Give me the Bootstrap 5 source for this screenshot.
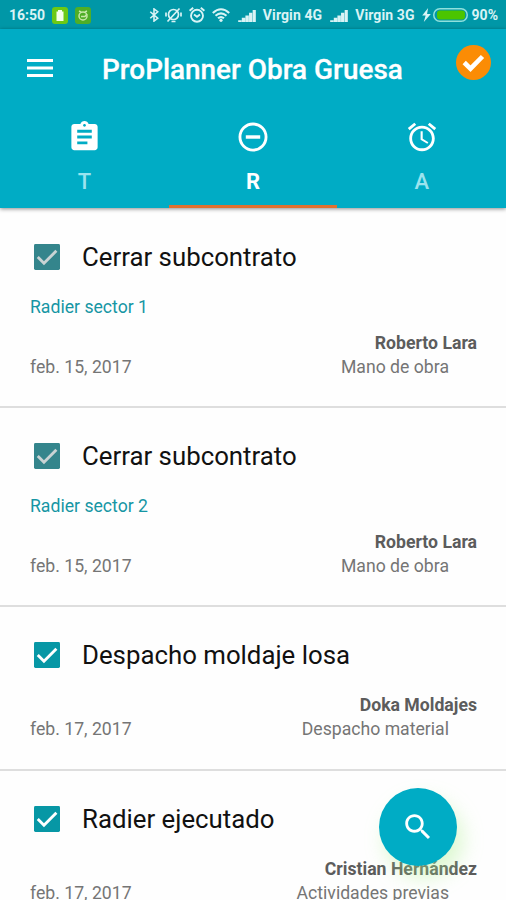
<!DOCTYPE html>
<html lang="es">
<head>
<meta charset="utf-8">
<meta name="viewport" content="width=device-width, initial-scale=1">
<title>ProPlanner Obra Gruesa</title>
<link href="https://cdn.jsdelivr.net/npm/bootstrap@5.3.0/dist/css/bootstrap.min.css" rel="stylesheet">
<style>
body{font-family:Roboto,"Liberation Sans",sans-serif;height:900px;background:#fefefe;overflow:hidden}
svg{display:block;flex:none}
.status-bar{height:29px;background:#0097a7;color:#d9f3f5;font-size:14px;font-weight:700;line-height:29px;padding:1px 8px 0 9px}
.st-bat{margin-left:7px}
.st-icon{margin-left:6px}
.st-net{letter-spacing:.1px;margin-left:7px}
.app-head{height:179px;background:#00acc5;box-shadow:0 1px 4px rgba(0,0,0,.45);z-index:2}
.app-title{font-size:27.9px;font-weight:500;line-height:36px;margin:2px 0 0 46px;-webkit-text-stroke:.3px #fff}
.tool-bar{height:80px;padding:0 15px 0 24px}
.done-mark{margin-bottom:13px}
.tab-strip{height:99px}
.tab-item{height:99px;padding:10px 0 0;border-bottom:3px solid transparent;border-radius:0;color:#9be3ee}
.tab-item.active{color:#fff;border-color:#e0702f}
.tab-item svg{color:#fff}
.tab-item span{font-size:22px;line-height:26px;font-weight:500;margin-top:14px}
.task-list{padding-top:.6px}
.task{height:199.2px;padding:29.2px 29px 0 30px;border-bottom:2px solid #dedede}
.task.short{height:164px}
.task-title{font-size:25.8px;font-weight:400;line-height:38px;margin:0 0 0 22px;color:#111}
.task-sub{font-size:17.65px;line-height:24px;margin-top:19px;color:#1696a4}
.task-meta{font-size:17.65px;line-height:24px;margin-top:12px;color:#757575}
.short .task-meta{margin-top:19px}
.task-owner{font-weight:700;color:#5c5c5c}
.task-kind{margin-right:28px}
.task-box{margin-left:4px}
.box-on{color:#0797a5;--tick:#fff}
.box-off{color:#34858c;--tick:#c9d3d4}
.fab{position:fixed;left:379px;top:788px;width:78px;height:78px;background:#00acc5;box-shadow:6px 12px 20px rgba(170,240,140,.4);z-index:3}
</style>
<script src="https://cdn.jsdelivr.net/npm/bootstrap@5.3.0/dist/js/bootstrap.bundle.min.js"></script>
</head>
<body>
<svg width="0" height="0" class="d-none">
  <symbol id="signal" viewBox="0 0 19 14"><path fill="currentColor" d="M0 12h3.700v2H0zM3.900 9.500h3.700V14H3.900zM7.800 7h3.700v7H7.800zM11.700 4h3.500v10h-3.500zM15.600 1H19v13h-3.400z"/></symbol>
  <symbol id="alarm" viewBox="0 0 24 24"><path fill="currentColor" d="M22 5.720l-4.600-3.860-1.290 1.530 4.600 3.860L22 5.720zM7.880 3.390L6.600 1.860 2 5.710l1.290 1.530 4.590-3.850zM12.500 8H11v6l4.750 2.850.75-1.230-4-2.370V8zM12 4c-4.970 0-9 4.030-9 9s4.020 9 9 9c4.970 0 9-4.030 9-9s-4.030-9-9-9zm0 16c-3.870 0-7-3.130-7-7s3.130-7 7-7 7 3.130 7 7-3.130 7-7 7z"/></symbol>
  <symbol id="alarm-small" viewBox="0 0 18 18"><g fill="none" stroke="currentColor" stroke-width="1.900"><circle cx="9" cy="9.800" r="6"/><path d="M1.600 4.800l3.600-3M16.400 4.800l-3.600-3M6 8.500l3 2.300 3-2.300"/></g></symbol>
  <symbol id="checkbox" viewBox="3 3 18 18"><rect x="3" y="3" width="18" height="18" rx="1" fill="currentColor"/><path d="M5.600 12l4.300 4.300 8.600-8.600" fill="none" stroke="var(--tick)" stroke-width="2"/></symbol>
</svg>

<div class="status-bar d-flex align-items-center">
  <span>16:50</span>
  <svg class="st-bat" width="16" height="17" viewBox="0 0 16 17"><rect width="16" height="17" rx="3" fill="#6cc915"/><path fill="#f5ffe9" d="M4.500 4.500H6V3h4v1.500h1.500V14h-7z"/></svg>
  <svg class="st-bat" width="16" height="17" viewBox="0 0 16 17"><rect width="16" height="17" rx="3" fill="#4fae27"/><g fill="none" stroke="#c6e8a8" stroke-width="1.500"><circle cx="8" cy="9" r="4"/><path d="M4 4l2 1M12 4l-2 1M6 9.500h4l2-2.500"/></g></svg>
  <div class="d-flex align-items-center ms-auto">
    <svg width="10" height="14" viewBox="0 0 10 15"><path d="M1 4l8 7-4 3V1L9 4l-8 7" fill="none" stroke="currentColor" stroke-width="1.700"/></svg>
    <svg class="st-icon" width="17" height="16" viewBox="0 0 17 16"><g fill="none" stroke="currentColor" stroke-width="1.700"><circle cx="8.500" cy="7.500" r="5"/><path d="M6.500 14.500h4M2.500 14.500L14.500 1.500M1 5.500v4M16 5.500v4"/></g></svg>
    <svg class="st-icon" width="18" height="18"><use href="#alarm-small"/></svg>
    <svg class="st-icon" width="18" height="14" viewBox="0 0 18 14"><g fill="none" stroke="currentColor" stroke-width="2.100"><path d="M.8 5Q9-2.500 17.200 5M3.500 7.800q5.500-4.800 11 0M6 10.300q3-2.500 6 0"/></g><circle cx="9" cy="12.300" r="1.600" fill="currentColor"/></svg>
    <svg class="ms-2" width="18" height="13"><use href="#signal"/></svg>
    <span class="st-net">Virgin 4G</span>
    <svg class="ms-2" width="18" height="13"><use href="#signal"/></svg>
    <span class="st-net">Virgin 3G</span>
    <svg class="st-bat" width="9" height="14" viewBox="0 0 8 13"><path d="M5.500 0L0 7h3.200L1.500 13 8 5.500H4.500z" fill="currentColor"/></svg>
    <svg style="margin-left:2px" width="35" height="14" viewBox="0 0 35 14"><rect x=".8" y=".8" width="33.400" height="12.400" rx="6" fill="none" stroke="#8fe0dc" stroke-width="1.500"/><rect x="4" y="2.500" width="28" height="9" rx="3" fill="#4bc500"/></svg>
    <span class="ms-1">90%</span>
  </div>
</div>

<header class="app-head position-relative text-white">
  <div class="tool-bar d-flex align-items-center">
    <svg width="32" height="24" viewBox="0 0 32 24"><path d="M3 3.500h26M3 11h26M3 18.500h26" stroke="#fff" stroke-width="3.200"/></svg>
    <h1 class="app-title text-nowrap">ProPlanner Obra Gruesa</h1>
    <svg class="done-mark ms-auto" width="35" height="35" viewBox="0 0 35 35"><circle cx="17.500" cy="17.500" r="17.500" fill="#fb8c05"/><path d="M8.200 17.500l6.300 6.200L26.500 11.500" fill="none" stroke="#fff" stroke-width="4.600"/></svg>
  </div>
  <nav class="nav nav-fill tab-strip flex-nowrap">
    <a class="tab-item nav-link d-flex flex-column align-items-center w-100" href="#">
      <svg width="35" height="36" viewBox="0 0 24 24"><path fill="currentColor" d="M19 3h-4.180C14.400 1.840 13.300 1 12 1c-1.300 0-2.400.84-2.820 2H5c-1.100 0-2 .9-2 2v14c0 1.100.9 2 2 2h14c1.100 0 2-.9 2-2V5c0-1.100-.9-2-2-2zm-7 0c.55 0 1 .45 1 1s-.45 1-1 1-1-.45-1-1 .45-1 1-1zm2 14H7v-2h7v2zm3-4H7v-2h10v2zm0-4H7V7h10v2z"/></svg>
      <span>T</span></a>
    <a class="tab-item active nav-link d-flex flex-column align-items-center w-100" href="#">
      <svg width="36" height="36" viewBox="0 0 24 24"><circle cx="12" cy="12" r="8.700" fill="none" stroke="currentColor" stroke-width="1.900"/><path d="M7.200 12h9.600" stroke="currentColor" stroke-width="2.300"/></svg>
      <span class="fw-bold">R</span></a>
    <a class="tab-item nav-link d-flex flex-column align-items-center w-100" href="#">
      <svg width="34" height="36" viewBox="0 0 24 24"><use href="#alarm"/></svg>
      <span>A</span></a>
  </nav>
</header>

<main class="task-list">
  <article class="task">
    <div class="d-flex align-items-center"><svg class="task-box box-off" width="26" height="26"><use href="#checkbox"/></svg><h2 class="task-title">Cerrar subcontrato</h2></div>
    <div class="task-sub">Radier sector 1</div>
    <div class="task-meta d-flex justify-content-between align-items-end"><span>feb. 15, 2017</span><div class="text-end"><div class="task-owner">Roberto Lara</div><div class="task-kind">Mano de obra</div></div></div>
  </article>
  <article class="task">
    <div class="d-flex align-items-center"><svg class="task-box box-off" width="26" height="26"><use href="#checkbox"/></svg><h2 class="task-title">Cerrar subcontrato</h2></div>
    <div class="task-sub">Radier sector 2</div>
    <div class="task-meta d-flex justify-content-between align-items-end"><span>feb. 15, 2017</span><div class="text-end"><div class="task-owner">Roberto Lara</div><div class="task-kind">Mano de obra</div></div></div>
  </article>
  <article class="task short">
    <div class="d-flex align-items-center"><svg class="task-box box-on" width="26" height="26"><use href="#checkbox"/></svg><h2 class="task-title">Despacho moldaje losa</h2></div>
    <div class="task-meta d-flex justify-content-between align-items-end"><span>feb. 17, 2017</span><div class="text-end"><div class="task-owner">Doka Moldajes</div><div class="task-kind">Despacho material</div></div></div>
  </article>
  <article class="task short">
    <div class="d-flex align-items-center"><svg class="task-box box-on" width="26" height="26"><use href="#checkbox"/></svg><h2 class="task-title">Radier ejecutado</h2></div>
    <div class="task-meta d-flex justify-content-between align-items-end"><span>feb. 17, 2017</span><div class="text-end"><div class="task-owner">Cristian Hernández</div><div class="task-kind">Actividades previas</div></div></div>
  </article>
</main>

<button class="fab btn rounded-circle border-0 p-0 d-flex align-items-center justify-content-center" aria-label="Buscar">
  <svg width="34" height="34" viewBox="0 0 24 24"><path fill="#fff" d="M15.500 14h-.79l-.28-.27C15.410 12.590 16 11.110 16 9.500 16 5.910 13.090 3 9.500 3S3 5.910 3 9.500 5.910 16 9.500 16c1.610 0 3.090-.59 4.230-1.570l.27.28v.79l5 4.990L20.490 19l-4.990-5zm-6 0C7.010 14 5 11.990 5 9.500S7.010 5 9.500 5 14 7.010 14 9.500 11.990 14 9.500 14z"/></svg>
</button>
</body>
</html>
